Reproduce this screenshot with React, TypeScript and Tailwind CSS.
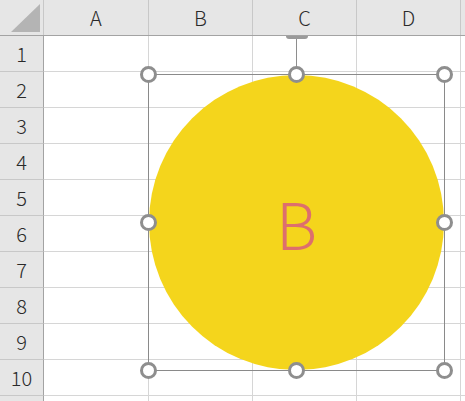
import React from "react";

const cols = ["A", "B", "C", "D", ""];
const colW = ["w-[105px]", "w-[104px]", "w-[104px]", "w-[104px]", "w-[104px]"];
const rows = [1, 2, 3, 4, 5, 6, 7, 8, 9, 10, 11];

const font = { fontFamily: '"Noto Sans CJK JP", "Noto Sans", sans-serif' } as const;

function Handle({ hidden }: { hidden?: boolean }) {
  return (
    <div
      className={`w-[17px] h-[17px] rounded-full ${
        hidden ? "" : "bg-white border-[3px] border-[#8e8e8e]"
      }`}
    />
  );
}

function HandleRow({ middle = true }: { middle?: boolean }) {
  return (
    <div className="flex justify-between">
      <Handle />
      <Handle hidden={!middle} />
      <Handle />
    </div>
  );
}

export default function App() {
  return (
    <div className="relative w-[465px] h-[401px] overflow-hidden bg-white text-[#2a2a2a]" style={font}>
      {/* header row */}
      <div className="flex h-[36px] bg-[#e6e6e6] border-b border-[#a3a3a3] relative z-20">
        <div className="w-[44px] shrink-0 border-r border-[#c8c8c8] flex items-end justify-end pr-[3px] pb-[3px]">
          <svg width="29" height="28" viewBox="0 0 29 28">
            <polygon points="29,0 29,28 0,28" fill="#b4b4b4" />
          </svg>
        </div>
        {cols.map((c, i) => (
          <div
            key={i}
            className={`${colW[i]} shrink-0 border-r border-[#c8c8c8] flex items-center justify-center text-[20px] font-light leading-none`}
          >
            {c}
          </div>
        ))}
      </div>
      {/* body rows */}
      {rows.map((r) => (
        <div key={r} className="flex h-[36px]">
          <div className="w-[44px] shrink-0 bg-[#e6e6e6] border-r border-[#a3a3a3] border-b border-b-[#c8c8c8] flex items-center justify-center text-[20px] font-light leading-none">
            {r <= 10 ? r : ""}
          </div>
          {cols.map((c, i) => (
            <div key={i} className={`${colW[i]} shrink-0 border-r border-b border-[#d6d6d6]`} />
          ))}
        </div>
      ))}

      {/* shape overlay, clipped to the sheet area */}
      <div className="absolute left-[44px] top-[36px] right-0 bottom-0 overflow-hidden z-10">
        <div className="flex flex-col items-start pl-[104px]">
          {/* rotation handle + connector */}
          <div className="w-[297px] flex flex-col items-center">
            <div className="w-[22px] h-[3px] rounded-b-full bg-[#9a9a9a]" />
            <div className="w-[1px] h-[35px] bg-[#8e8e8e]" />
          </div>
          {/* selection box with circle */}
          <div className="relative w-[297px] h-[297px] border border-[#8a8a8a]">
            <div className="w-full h-full rounded-full bg-[#f4d51c] flex items-center justify-center">
              <span className="text-[64px] leading-none font-extralight text-[#dd6f6d] -mt-[2px]">B</span>
            </div>
            <div className="absolute inset-[-9px] flex flex-col justify-between">
              <HandleRow />
              <HandleRow middle={false} />
              <HandleRow />
            </div>
          </div>
        </div>
      </div>
    </div>
  );
}
